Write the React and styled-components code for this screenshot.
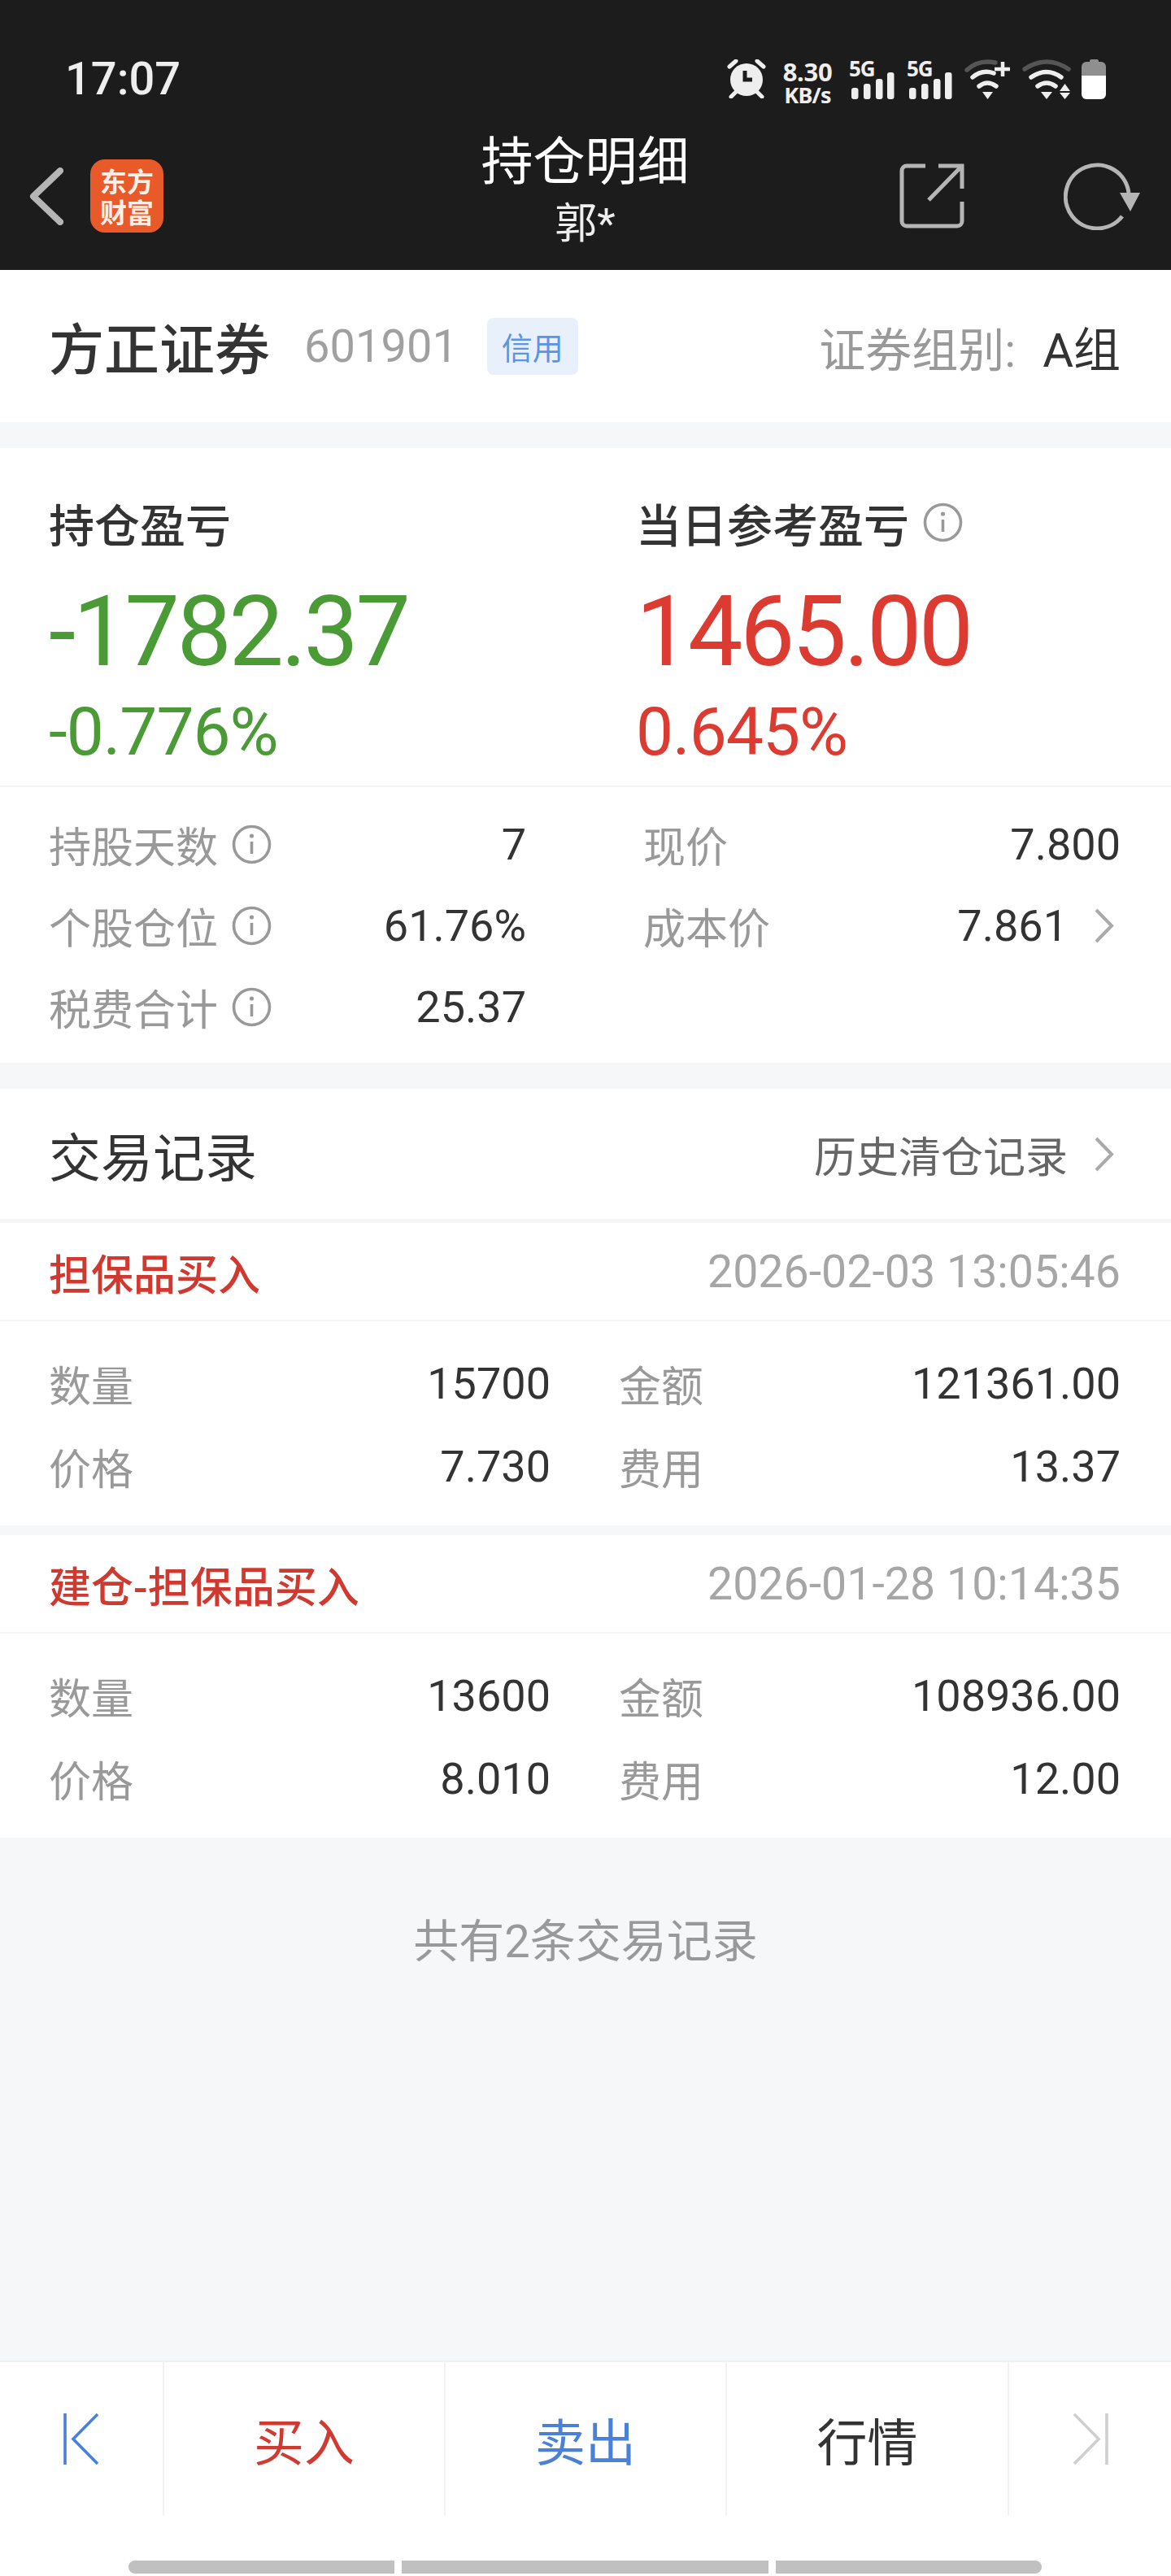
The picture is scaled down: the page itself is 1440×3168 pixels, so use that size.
import React from 'react';
import styled, { createGlobalStyle } from 'styled-components';

const GlobalStyle = createGlobalStyle`
  html, body {
    margin: 0;
    padding: 0;
    background: #f6f7f9;
  }
  * {
    box-sizing: border-box;
  }
  body {
    font-family: Roboto, "Noto Sans CJK SC", sans-serif;
    color: #333;
  }
`;

const details = [
  [
    { label: '持股天数', info: true, value: '7' },
    { label: '现价', value: '7.800' },
  ],
  [
    { label: '个股仓位', info: true, value: '61.76%' },
    { label: '成本价', value: '7.861', more: true },
  ],
  [{ label: '税费合计', info: true, value: '25.37' }],
];

const trades = [
  {
    title: '担保品买入',
    time: '2026-02-03 13:05:46',
    qty: '15700',
    amount: '121361.00',
    price: '7.730',
    fee: '13.37',
  },
  {
    title: '建仓-担保品买入',
    time: '2026-01-28 10:14:35',
    qty: '13600',
    amount: '108936.00',
    price: '8.010',
    fee: '12.00',
  },
];

function App() {
  return (
    <Page>
      <GlobalStyle />
      <Header>
        <StatusBar>
          <Clock>17:07</Clock>
          <StatusIcons>
            <AlarmIcon />
            <Speed>
              <SpeedValue>8.30</SpeedValue>
              <SpeedUnit>KB/s</SpeedUnit>
            </Speed>
            <Signal />
            <Signal />
            <WifiPlusIcon />
            <WifiArrowsIcon />
            <BatterySlot>
              <BatteryIcon />
            </BatterySlot>
          </StatusIcons>
        </StatusBar>
        <NavBar>
          <NavLeft>
            <BackIcon />
            <Logo>
              <span>东方</span>
              <span>财富</span>
            </Logo>
          </NavLeft>
          <NavTitle>
            <h1>持仓明细</h1>
            <p>郭*</p>
          </NavTitle>
          <NavRight>
            <ShareIcon />
            <RefreshIcon />
          </NavRight>
        </NavBar>
      </Header>

      <StockRow>
        <StockName>方正证券</StockName>
        <StockCode>601901</StockCode>
        <CreditTag>信用</CreditTag>
        <GroupLabel>证券组别:</GroupLabel>
        <GroupValue>A组</GroupValue>
      </StockRow>

      <Section>
        <Summary>
          <div>
            <SummaryLabel>持仓盈亏</SummaryLabel>
            <BigValue $color="#4a9b35">-1782.37</BigValue>
            <Percent $color="#4a9b35">-0.776%</Percent>
          </div>
          <div>
            <SummaryLabel>
              当日参考盈亏
              <InfoIcon />
            </SummaryLabel>
            <BigValue $color="#dc3b32">1465.00</BigValue>
            <Percent $color="#dc3b32">0.645%</Percent>
          </div>
        </Summary>
        <DetailGrid>
          {details.flat().map((item) => (
            <DetailItem key={item.label}>
              <DetailLabel>
                {item.label}
                {item.info && <InfoIcon />}
              </DetailLabel>
              <DetailValue>
                {item.value}
                {item.more && <ChevronIcon />}
              </DetailValue>
            </DetailItem>
          ))}
        </DetailGrid>
      </Section>

      <Section>
        <RecordHead>
          <RecordTitle>交易记录</RecordTitle>
          <HistoryLink>
            历史清仓记录
            <ChevronIcon />
          </HistoryLink>
        </RecordHead>
        {trades.map((trade) => (
          <Trade key={trade.time}>
            <TradeHead>
              <TradeTitle>{trade.title}</TradeTitle>
              <TradeTime>{trade.time}</TradeTime>
            </TradeHead>
            <TradeGrid>
              <TradeCell><span>数量</span><b>{trade.qty}</b></TradeCell>
              <TradeCell><span>金额</span><b>{trade.amount}</b></TradeCell>
              <TradeCell><span>价格</span><b>{trade.price}</b></TradeCell>
              <TradeCell><span>费用</span><b>{trade.fee}</b></TradeCell>
            </TradeGrid>
          </Trade>
        ))}
      </Section>

      <Total>共有2条交易记录</Total>

      <BottomBar>
        <Tabs>
          <Tab>
            <EdgeIcon color="#4a80d8" />
          </Tab>
          <Tab $color="#d03a30">买入</Tab>
          <Tab $color="#4a80d8">卖出</Tab>
          <Tab $color="#333">行情</Tab>
          <Tab>
            <EdgeIcon color="#cfcfcf" flip />
          </Tab>
        </Tabs>
        <Handle>
          <HandlePart $grow={327} $left />
          <HandlePart $grow={451} />
          <HandlePart $grow={327} $right />
        </Handle>
      </BottomBar>
    </Page>
  );
}

const AlarmIcon = () => (
  <svg width="48" height="48" viewBox="0 0 48 48">
    <circle cx="24" cy="25" r="20" fill="#eee" />
    <path d="M3 9l8-7M37 2l8 7M5 46l6-6M37 40l6 6" stroke="#eee" strokeWidth="5" strokeLinecap="round" fill="none" />
    <path d="M22 14v11h9" stroke="#1c1c1c" strokeWidth="5" fill="none" />
  </svg>
);

const Signal = () => (
  <SignalBox>
    <FiveG>5G</FiveG>
    <svg width="56" height="49" viewBox="0 0 56 49">
      <rect x="3" y="35" width="8.5" height="14" rx="3" fill="#eee" />
      <rect x="18" y="30" width="8.5" height="19" rx="3" fill="#eee" />
      <rect x="33" y="24" width="8.5" height="25" rx="3" fill="#eee" />
      <rect x="47" y="16" width="8.5" height="33" rx="3" fill="#eee" />
    </svg>
  </SignalBox>
);

const WifiPlusIcon = () => (
  <svg width="56" height="50" viewBox="0 0 56 50">
    <path d="M3 13Q14 3 28 3Q33 3 38 4" stroke="#555" strokeWidth="5.5" fill="none" strokeLinecap="round" />
    <path d="M10 22Q22 12 36 17" stroke="#eee" strokeWidth="5.5" fill="none" strokeLinecap="round" />
    <path d="M18 33Q28 25 39 33" stroke="#eee" strokeWidth="5.5" fill="none" strokeLinecap="round" />
    <path d="M22 40H35L28.5 49Z" fill="#eee" />
    <path d="M47 3V21M37 12H56" stroke="#eee" strokeWidth="4.5" fill="none" />
  </svg>
);

const WifiArrowsIcon = () => (
  <svg width="60" height="50" viewBox="0 0 60 50">
    <path d="M3 12Q30 -6 57 12" stroke="#555" strokeWidth="5.5" fill="none" strokeLinecap="round" />
    <path d="M11 22Q30 9 48 22" stroke="#eee" strokeWidth="5.5" fill="none" strokeLinecap="round" />
    <path d="M19 33Q30 25 41 33" stroke="#eee" strokeWidth="5.5" fill="none" strokeLinecap="round" />
    <path d="M23 40H37L30 49Z" fill="#eee" />
    <path d="M46 39L52.5 30L59 39ZM46 41H59L52.5 49Z" fill="#eee" />
  </svg>
);

const BatteryIcon = () => (
  <svg width="30" height="49" viewBox="0 0 30 49">
    <rect x="10" y="0" width="11" height="5" rx="2" fill="#8f8f8f" />
    <path d="M0 20V9a6 6 0 0 1 6-6H24a6 6 0 0 1 6 6V20Z" fill="#8f8f8f" />
    <path d="M0 20H30V43a6 6 0 0 1-6 6H6a6 6 0 0 1-6-6Z" fill="#fff" />
  </svg>
);

const BackIcon = () => (
  <svg width="42" height="71" viewBox="0 0 42 71">
    <path d="M38 4L5 35.5L38 67" stroke="#b5b5b5" strokeWidth="8" fill="none" strokeLinecap="round" strokeLinejoin="round" />
  </svg>
);

const ShareIcon = () => (
  <svg width="80" height="80" viewBox="0 0 80 80">
    <path d="M32 3H9a6 6 0 0 0-6 6V71a6 6 0 0 0 6 6H71a6 6 0 0 0 6-6V47" stroke="#b5b5b5" strokeWidth="5" fill="none" />
    <path d="M48 3H77V31M77 3L36 45" stroke="#b5b5b5" strokeWidth="5" fill="none" />
  </svg>
);

const RefreshIcon = () => (
  <svg width="95" height="84" viewBox="0 0 95 84">
    <path d="M72 67A39 39 0 1 1 80 38" stroke="#b5b5b5" strokeWidth="5" fill="none" />
    <path d="M69 38H94L82 61Z" fill="#b5b5b5" />
  </svg>
);

const InfoIcon = () => (
  <InfoSvg width="49" height="49" viewBox="0 0 49 49">
    <circle cx="24.5" cy="24.5" r="22" stroke="#999" strokeWidth="3.6" fill="none" />
    <circle cx="24.5" cy="14" r="2.6" fill="#999" />
    <path d="M24.5 21V36" stroke="#999" strokeWidth="3.6" />
  </InfoSvg>
);

const ChevronIcon = () => (
  <ChevronSvg width="25" height="43" viewBox="0 0 25 43">
    <path d="M3 2L22 21.5L3 41" stroke="#aaa" strokeWidth="4" fill="none" />
  </ChevronSvg>
);

const EdgeIcon = ({ color, flip }) => (
  <svg
    width="44"
    height="63"
    viewBox="0 0 44 63"
    style={flip ? { transform: 'scaleX(-1)' } : undefined}
  >
    <path d="M2 0V63M42 1L12 31.5L42 62" stroke={color} strokeWidth="3.6" fill="none" />
  </svg>
);

const Page = styled.div`
  width: 1440px;
  height: 3168px;
  display: flex;
  flex-direction: column;
  background: #f6f7f9;
  overflow: hidden;
`;

const Header = styled.header`
  background: #1c1c1c;
  height: 332px;
  color: #fff;
`;

const StatusBar = styled.div`
  height: 150px;
  padding: 44px 80px 0 80px;
  display: flex;
  align-items: flex-start;
  justify-content: space-between;
`;

const Clock = styled.div`
  font-size: 56px;
  line-height: 54px;
  font-weight: 500;
  color: #eee;
  margin-top: 26px;
`;

const StatusIcons = styled.div`
  display: flex;
  align-items: flex-start;
  gap: 15px;
  padding-top: 29px;
`;

const Speed = styled.div`
  width: 62px;
  margin: 0 5px;
  display: flex;
  flex-direction: column;
  align-items: center;
  font-family: "Noto Sans", sans-serif;
  font-weight: 700;
  color: #eee;
`;

const SpeedValue = styled.span`
  font-size: 31px;
  line-height: 30px;
  letter-spacing: -0.3px;
`;

const SpeedUnit = styled.span`
  font-size: 27px;
  line-height: 26px;
  margin-top: 1px;
  letter-spacing: -0.8px;
`;

const SignalBox = styled.div`
  position: relative;
  width: 56px;
  height: 49px;
`;

const FiveG = styled.span`
  position: absolute;
  left: 0;
  top: -3px;
  font-family: "Noto Sans", sans-serif;
  font-size: 26px;
  line-height: 28px;
  font-weight: 700;
  color: #eee;
  letter-spacing: -1px;
`;

const BatterySlot = styled.div`
  margin-left: -2px;
`;

const NavBar = styled.div`
  height: 182px;
  padding: 0 37px 0 36px;
  display: grid;
  grid-template-columns: 1fr auto 1fr;
  align-items: center;
`;

const NavLeft = styled.div`
  display: flex;
  align-items: center;
  gap: 33px;
`;

const Logo = styled.div`
  width: 90px;
  height: 90px;
  border-radius: 18px;
  background: #e85a2a;
  display: flex;
  flex-direction: column;
  align-items: center;
  justify-content: center;
  font-family: "Noto Sans CJK SC", sans-serif;
  font-size: 33px;
  line-height: 38px;
  font-weight: 700;
  color: #fdeee6;
`;

const NavTitle = styled.div`
  text-align: center;
  margin-top: -14px;

  h1 {
    margin: 0;
    font-size: 64px;
    line-height: 76px;
    font-weight: 400;
    color: #fff;
  }

  p {
    margin: 8px 0 0;
    font-size: 52px;
    line-height: 60px;
    font-weight: 400;
    color: #eee;
  }
`;

const NavRight = styled.div`
  display: flex;
  justify-content: flex-end;
  align-items: center;
  gap: 122px;
`;

const StockRow = styled.div`
  background: #fff;
  height: 187px;
  padding: 0 62px 0 60px;
  display: flex;
  align-items: center;
`;

const StockName = styled.div`
  font-size: 68px;
  font-weight: 500;
  color: #333;
`;

const StockCode = styled.div`
  margin-left: 42px;
  font-size: 56px;
  color: #a0a0a0;
`;

const CreditTag = styled.div`
  margin-left: 36px;
  width: 112px;
  height: 70px;
  border-radius: 8px;
  background: #e8f0fb;
  color: #5a94e8;
  font-size: 38px;
  display: flex;
  align-items: center;
  justify-content: center;
`;

const GroupLabel = styled.div`
  margin-left: auto;
  font-size: 57px;
  color: #999;
`;

const GroupValue = styled.div`
  margin-left: 33px;
  font-size: 58px;
  color: #333;
`;

const Section = styled.section`
  margin-top: 32px;
  background: #fff;
`;

const Summary = styled.div`
  display: grid;
  grid-template-columns: 722px 1fr;
  padding: 56px 62px 26px 60px;
`;

const SummaryLabel = styled.div`
  height: 70px;
  display: flex;
  align-items: center;
  font-size: 56px;
  font-weight: 500;
  color: #333;
`;

const BigValue = styled.div`
  margin-top: 35px;
  font-size: 120px;
  line-height: 130px;
  letter-spacing: -3.5px;
  color: ${(p) => p.$color};
`;

const Percent = styled.div`
  margin-top: 18px;
  font-size: 82px;
  line-height: 80px;
  letter-spacing: -1px;
  color: ${(p) => p.$color};
`;

const InfoSvg = styled.svg`
  margin-left: 17px;
  flex: none;
`;

const ChevronSvg = styled.svg`
  margin-left: 32px;
  margin-right: 8px;
  flex: none;
`;

const DetailGrid = styled.div`
  display: grid;
  grid-template-columns: 1fr 1fr;
  column-gap: 144px;
  border-top: 2px solid #f3f4f6;
  padding: 20px 62px 19px 60px;
`;

const DetailItem = styled.div`
  height: 100px;
  display: flex;
  align-items: center;
  justify-content: space-between;
`;

const DetailLabel = styled.div`
  display: flex;
  align-items: center;
  font-size: 52px;
  color: #999;
`;

const DetailValue = styled.div`
  display: flex;
  align-items: center;
  font-size: 54px;
  color: #333;
`;

const RecordHead = styled.div`
  height: 165px;
  padding: 0 62px 0 60px;
  display: flex;
  align-items: center;
  justify-content: space-between;
  border-bottom: 5px solid #f5f6f8;
`;

const RecordTitle = styled.div`
  font-size: 64px;
  font-weight: 400;
  color: #333;
`;

const HistoryLink = styled.div`
  display: flex;
  align-items: center;
  font-size: 52px;
  color: #666;
`;

const Trade = styled.div`
  & + & {
    border-top: 12px solid #f6f7f9;
  }
`;

const TradeHead = styled.div`
  height: 121px;
  padding: 2px 62px 0 60px;
  display: flex;
  align-items: center;
  justify-content: space-between;
  border-bottom: 2px solid #f5f6f7;
`;

const TradeTitle = styled.div`
  font-size: 52px;
  font-weight: 500;
  color: #d0392f;
`;

const TradeTime = styled.div`
  font-size: 55.5px;
  color: #a6a6a6;
`;

const TradeGrid = styled.div`
  display: grid;
  grid-template-columns: 1fr 1fr;
  column-gap: 84px;
  padding: 25px 62px 22px 60px;
`;

const TradeCell = styled.div`
  height: 102px;
  display: flex;
  align-items: center;
  justify-content: space-between;

  span {
    font-size: 52px;
    color: #999;
  }

  b {
    font-size: 54px;
    font-weight: 400;
    color: #333;
  }
`;

const Total = styled.div`
  flex: 1;
  padding-top: 94px;
  text-align: center;
  font-size: 56px;
  line-height: 68px;
  color: #999;
`;

const BottomBar = styled.footer`
  height: 265px;
  background: #fff;
  border-top: 2px solid #efefef;
`;

const Tabs = styled.div`
  height: 189px;
  display: grid;
  grid-template-columns: 200px 346px 346px 347px 1fr;
`;

const Tab = styled.div`
  display: flex;
  align-items: center;
  justify-content: center;
  font-size: 62px;
  color: ${(p) => p.$color || '#333'};

  & + & {
    border-left: 2px solid #f2f2f2;
  }
`;

const Handle = styled.div`
  margin: 55px 159px 0 158px;
  height: 16px;
  display: flex;
  gap: 9px;
`;

const HandlePart = styled.div`
  flex: ${(p) => p.$grow};
  background: #c0c0c0;
  border-radius: ${(p) => (p.$left ? '10px 0 0 10px' : p.$right ? '0 10px 10px 0' : '0')};
`;

export default App;
